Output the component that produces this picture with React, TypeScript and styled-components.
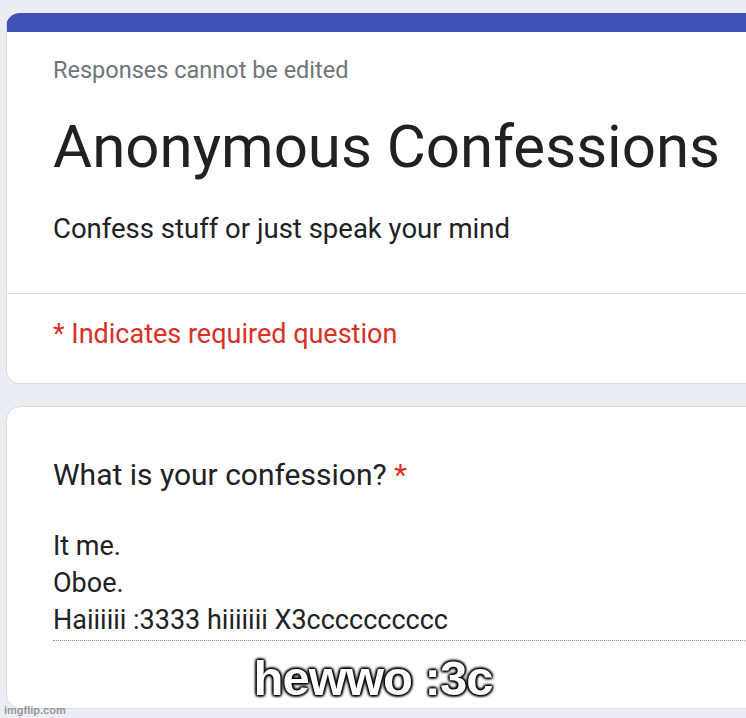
import styled, { createGlobalStyle } from "styled-components";

const GlobalStyle = createGlobalStyle`
  html, body {
    margin: 0;
    padding: 0;
    background-color: #ebedf5;
    overflow: hidden;
  }
  body {
    font-family: Roboto, "Noto Sans", Arial, sans-serif;
  }
`;

const Page = styled.div`
  position: relative;
  width: 746px;
  height: 718px;
  padding: 13px 0 0 6px;
  box-sizing: border-box;
  display: flex;
  flex-direction: column;
  gap: 22px;
  overflow: hidden;
`;

const Card = styled.div<{ $accent?: boolean }>`
  width: 800px;
  flex-shrink: 0;
  background-color: #fff;
  border: 1px solid #dadce0;
  border-radius: 14px;
  box-sizing: border-box;
  overflow: hidden;
  ${(p) => p.$accent && "border-top: 19px solid #3f51b5;"}
`;

const Section = styled.div<{ $pt: number; $pb: number }>`
  padding: ${(p) => p.$pt}px 46px ${(p) => p.$pb}px 46px;
`;

const Divider = styled.div`
  height: 1px;
  background-color: #dadce0;
`;

const Note = styled.div`
  font-size: 23.5px;
  line-height: 30px;
  color: #70757a;
`;

const Title = styled.h1`
  margin: 27px 0 0 0;
  font-size: 60px;
  line-height: 70px;
  font-weight: 400;
  color: #202124;
`;

const Subtitle = styled.div`
  margin-top: 29px;
  font-size: 27.5px;
  line-height: 36px;
  color: #202124;
`;

const Required = styled.div`
  font-size: 27px;
  line-height: 36px;
  color: #d93025;
`;

const Question = styled.div`
  font-size: 30px;
  line-height: 40px;
  color: #202124;
`;

const Star = styled.span`
  color: #d93025;
`;

const Answer = styled.div`
  margin-top: 33px;
  width: 740px;
  border-bottom: 1px dotted #8a8d91;
  padding-bottom: 1px;
`;

const AnswerLine = styled.div`
  font-size: 27px;
  line-height: 37px;
  color: #202124;
`;

const Caption = styled.div`
  position: absolute;
  left: 0;
  right: 0;
  top: 650px;
  text-align: center;
  font-family: "Liberation Sans", Arial, sans-serif;
  font-weight: 700;
  font-size: 49px;
  line-height: 56px;
  color: #fff;
  letter-spacing: -1px;
  text-shadow: 0 0 2px #000, 0 0 3px #000, 1px 1px 3px #000, -1px -1px 3px #000,
    1px -1px 3px #000, -1px 1px 3px #000;
`;

const Watermark = styled.div`
  position: absolute;
  left: 4px;
  bottom: 2px;
  font-family: "Liberation Sans", Arial, sans-serif;
  font-size: 11px;
  font-weight: 700;
  color: rgba(90, 90, 90, 0.6);
`;

export default function App() {
  return (
    <>
      <GlobalStyle />
      <Page>
        <Card $accent>
          <Section $pt={23} $pb={46}>
            <Note>Responses cannot be edited</Note>
            <Title>Anonymous Confessions</Title>
            <Subtitle>Confess stuff or just speak your mind</Subtitle>
          </Section>
          <Divider />
          <Section $pt={22} $pb={31}>
            <Required>* Indicates required question</Required>
          </Section>
        </Card>
        <Card>
          <Section $pt={48} $pb={67}>
            <Question>
              What is your confession? <Star>*</Star>
            </Question>
            <Answer>
              <AnswerLine>It me.</AnswerLine>
              <AnswerLine>Oboe.</AnswerLine>
              <AnswerLine>Haiiiiii :3333 hiiiiiii X3cccccccccc</AnswerLine>
            </Answer>
          </Section>
        </Card>
        <Caption>hewwo :3c</Caption>
        <Watermark>imgflip.com</Watermark>
      </Page>
    </>
  );
}
